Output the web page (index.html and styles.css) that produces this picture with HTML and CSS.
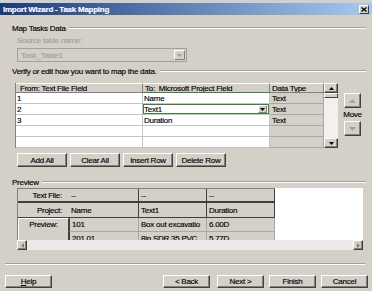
FILE: index.html
```html
<!DOCTYPE html>
<html>
<head>
  <title>Import Wizard - Task Mapping</title>
  <link rel="stylesheet" href="styles.css">
</head>
<body>
  <div class="window">

    <!-- Title bar -->
    <div class="titlebar">
      <span>Import Wizard - Task Mapping</span>
      <span class="close">
        <svg width="6" height="5" viewBox="0 0 6 5"><path d="M0.5 0.5 L5.5 4.5 M5.5 0.5 L0.5 4.5" stroke="#000" stroke-width="1.3"/></svg>
      </span>
    </div>

    <!-- Source table -->
    <div class="group-title">Map Tasks Data</div>
    <div class="field-label">Source table name:</div>
    <div class="combo">
      <span class="combo-text">Task_Table1</span>
      <span class="drop">
        <svg width="5" height="3" viewBox="0 0 5 3"><polygon points="0,0 5,0 2.5,3" fill="#a0a0a0"/></svg>
      </span>
    </div>

    <!-- Mapping grid -->
    <div class="group-title verify-title">Verify or edit how you want to map the data.</div>
    <div class="mapping">
      <div class="map-frame">
        <div class="map-table">
          <div class="cell head head-first">From: Text File Field</div>
          <div class="cell head head-focus">To:&nbsp; Microsoft Project Field</div>
          <div class="cell head">Data Type</div>

          <div class="cell">1</div>
          <div class="cell">Name</div>
          <div class="cell type">Text</div>

          <div class="cell">2</div>
          <div class="cell selected">
            <span>Text1</span>
            <span class="cell-drop">
              <svg width="5" height="3" viewBox="0 0 5 3"><polygon points="0,0 5,0 2.5,3" fill="#000"/></svg>
            </span>
          </div>
          <div class="cell type">Text</div>

          <div class="cell">3</div>
          <div class="cell">Duration</div>
          <div class="cell type">Text</div>

          <div class="cell"></div>
          <div class="cell"></div>
          <div class="cell type"></div>

          <div class="cell"></div>
          <div class="cell"></div>
          <div class="cell type"></div>
        </div>
        <div class="vscroll">
          <div class="sbtn">
            <svg width="5" height="3" viewBox="0 0 5 3"><polygon points="0,3 5,3 2.5,0" fill="#000"/></svg>
          </div>
          <div class="thumb"></div>
          <div class="track"></div>
          <div class="sbtn">
            <svg width="5" height="3" viewBox="0 0 5 3"><polygon points="0,0 5,0 2.5,3" fill="#000"/></svg>
          </div>
        </div>
      </div>
      <div class="move">
        <div class="move-btn">
          <svg width="7" height="4" viewBox="0 0 7 4"><polygon points="0,4 7,4 3.5,0" fill="#a0a0a0"/></svg>
        </div>
        <div class="move-label">Move</div>
        <div class="move-btn">
          <svg width="7" height="4" viewBox="0 0 7 4"><polygon points="0,0 7,0 3.5,4" fill="#a0a0a0"/></svg>
        </div>
      </div>
    </div>

    <div class="actions">
      <button class="btn">Add All</button>
      <button class="btn">Clear All</button>
      <button class="btn">Insert Row</button>
      <button class="btn">Delete Row</button>
    </div>

    <!-- Preview -->
    <div class="group-title">Preview</div>
    <div class="preview">
      <div class="preview-area">
        <div class="preview-grid">
          <div class="pv-label pv-first">Text File:</div>
          <div class="pv-cell pv-first">--</div>
          <div class="pv-cell pv-first">--</div>
          <div class="pv-cell pv-first">--</div>

          <div class="pv-label pv-second">Project:</div>
          <div class="pv-cell pv-second">Name</div>
          <div class="pv-cell pv-second">Text1</div>
          <div class="pv-cell pv-second">Duration</div>

          <div class="pv-label pv-rowhead">Preview:</div>
          <div class="pv-cell pv-data pv-lead">101</div>
          <div class="pv-cell pv-data">Box out excavatio</div>
          <div class="pv-cell pv-data">6.00D</div>

          <div class="pv-cell pv-data pv-lead">201.01</div>
          <div class="pv-cell pv-data">8in SDR 35 PVC</div>
          <div class="pv-cell pv-data">5.77D</div>
        </div>
        <div class="preview-blank"></div>
      </div>
      <div class="hscroll">
        <div class="sbtn">
          <svg width="3" height="5" viewBox="0 0 3 5"><polygon points="3,0 3,5 0,2.5" fill="#808080"/></svg>
        </div>
        <div class="track"></div>
        <div class="sbtn">
          <svg width="3" height="5" viewBox="0 0 3 5"><polygon points="0,0 0,5 3,2.5" fill="#808080"/></svg>
        </div>
      </div>
    </div>

    <div class="separator"></div>

    <!-- Wizard buttons -->
    <div class="footer">
      <button class="btn wide"><u>H</u>elp</button>
      <button class="btn wide back">&lt; Back</button>
      <button class="btn wide">Next &gt;</button>
      <button class="btn wide">Finish</button>
      <button class="btn wide">Cancel</button>
    </div>

  </div>
</body>
</html>
```

FILE: styles.css
```css
* {
  box-sizing: border-box;
}
body {
  margin: 0;
  font-family: "Liberation Sans", Arial, sans-serif;
  font-size: 8px;
  letter-spacing: -0.25px;
  color: #000;
  background: #d4d0c8;
  -webkit-text-stroke: 0.15px;
}
.window {
  width: 372px;
  height: 291px;
  overflow: hidden;
  padding-top: 3px;
  background: #d4d0c8;
}

/* Title bar */
.titlebar {
  display: flex;
  align-items: center;
  justify-content: space-between;
  height: 12px;
  padding: 0 3px 0 3px;
  background: linear-gradient(to right, #1c3a7a, #a6caf0);
  color: #fff;
  font-weight: bold;
}
.close {
  display: flex;
  align-items: center;
  justify-content: center;
  width: 10px;
  height: 9px;
  background: #d4d0c8;
  border: 1px solid;
  border-color: #fff #404040 #404040 #fff;
}

/* Group titles with etched line */
.group-title {
  display: flex;
  align-items: center;
  height: 10px;
  margin: 8px 6px 0 12px;
  white-space: nowrap;
}
.group-title::after {
  content: "";
  flex: 1;
  margin-left: 3px;
  border-top: 1px solid #a0a0a0;
  border-bottom: 1px solid #fff;
}
.verify-title {
  margin-top: 4px;
}

/* Source table */
.field-label {
  margin: 3px 0 0 17px;
  height: 10px;
  line-height: 10px;
  color: #a4a19b;
}
.combo {
  display: flex;
  align-items: center;
  justify-content: space-between;
  width: 170px;
  height: 14px;
  margin: 2px 0 0 17px;
  padding: 0 1px 0 3px;
  border: 1px solid #a0a0a0;
  color: #a4a19b;
}
.drop {
  display: flex;
  align-items: center;
  justify-content: center;
  width: 11px;
  height: 10px;
  border: 1px solid;
  border-color: #fff #808080 #808080 #fff;
}

/* Mapping grid */
.mapping {
  display: flex;
  margin: 7px 0 0 15px;
}
.map-frame {
  display: flex;
  border-left: 1px solid #808080;
}
.map-table {
  display: grid;
  grid-template-columns: 127px 127px 54px;
  grid-template-rows: 10px repeat(5, 11px);
}
.cell {
  display: flex;
  align-items: center;
  justify-content: space-between;
  padding-left: 1px;
  background: #fff;
  border-right: 1px solid #c4c4c4;
  border-bottom: 1px solid #c4c4c4;
  white-space: nowrap;
  overflow: hidden;
}
.head {
  padding-left: 2px;
  background: #d4d0c8;
  border-top: 1px solid #fff;
  border-right-color: #808080;
  border-bottom-color: #808080;
}
.head-first {
  padding-left: 4px;
}
.head-focus {
  border-bottom-color: #3f7f3f;
}
.type {
  padding-left: 2px;
  background: #d4d0c8;
  border-right-color: #a8a8a8;
  border-bottom-color: #a8a8a8;
}
.selected {
  box-shadow: inset 0 0 0 1px #3f7f3f;
  padding-right: 2px;
}
.cell-drop {
  display: flex;
  align-items: center;
  justify-content: center;
  width: 9px;
  height: 8px;
  background: #d4d0c8;
  border: 1px solid;
  border-color: #fff #808080 #808080 #fff;
}
.vscroll {
  display: flex;
  flex-direction: column;
  width: 14px;
  background: #f2f1ef;
}
.sbtn {
  display: flex;
  align-items: center;
  justify-content: center;
  width: 10px;
  height: 10px;
  flex: none;
  background: #d4d0c8;
  border: 1px solid;
  border-color: #fff #404040 #404040 #fff;
  box-shadow: inset -1px -1px #808080;
}
.vscroll .sbtn {
  width: 100%;
}
.thumb {
  height: 5px;
  background: #d4d0c8;
  border: 1px solid;
  border-color: #fff #404040 #404040 #fff;
}
.track {
  flex: 1;
}
.move {
  display: flex;
  flex-direction: column;
  align-items: center;
  width: 17px;
  margin: 10px 0 0 6px;
}
.move-btn {
  display: flex;
  align-items: center;
  justify-content: center;
  width: 17px;
  height: 15px;
  border: 1px solid;
  border-color: #fff #404040 #404040 #fff;
  box-shadow: inset -1px -1px #808080;
}
.move-label {
  height: 13px;
  line-height: 13px;
}

/* Buttons */
.btn {
  display: flex;
  align-items: center;
  justify-content: center;
  height: 14px;
  width: 50px;
  padding: 0;
  font: inherit;
  letter-spacing: inherit;
  color: #000;
  background: #d4d0c8;
  border: 1px solid;
  border-color: #fff #404040 #404040 #fff;
  box-shadow: inset -1px -1px #808080;
}
.actions {
  display: flex;
  gap: 3px;
  margin: 5px 0 0 17px;
}
.actions + .group-title {
  margin-top: 10px;
}

/* Preview */
.preview {
  width: 346px;
  margin: 1px 0 0 17px;
}
.preview-area {
  display: flex;
  height: 52px;
  overflow: hidden;
}
.preview-grid {
  display: grid;
  grid-template-columns: 51px 70px 68px 68px;
  grid-template-rows: 14px 15px 14px 14px;
  border-left: 1px solid #808080;
  border-top: 1px solid #808080;
}
.preview-blank {
  flex: 1;
  background: #fff;
}
.pv-label {
  display: flex;
  align-items: center;
  justify-content: center;
  white-space: nowrap;
}
.pv-cell {
  display: flex;
  align-items: center;
  padding-left: 2px;
  white-space: nowrap;
  overflow: hidden;
  border-right: 1px solid #404040;
}
.pv-first {
  border-bottom: 2px solid #404040;
}
.pv-second {
  border-bottom: 1px solid #404040;
}
.pv-label.pv-first,
.pv-label.pv-second {
  justify-content: flex-end;
  padding-right: 7px;
}
.pv-rowhead {
  grid-row: span 2;
  align-items: flex-start;
  padding-top: 1px;
  border: 1px solid;
  border-color: #fff #404040 #404040 #fff;
}
.pv-data {
  border-right-color: #a8a8a8;
  border-bottom: 1px solid #a8a8a8;
}
.pv-lead {
  border-left: 1px solid #404040;
}
.hscroll {
  display: flex;
  height: 10px;
  background: #eceae6;
}

/* Footer */
.separator {
  margin: 13px 7px 0 5px;
  border-top: 1px solid #a0a0a0;
  border-bottom: 1px solid #fff;
}
.footer {
  display: flex;
  gap: 5px;
  margin-top: 10px;
  padding: 0 4px 0 5px;
}
.wide {
  width: 47px;
  height: 13px;
}
.back {
  margin-left: auto;
  margin-right: 2px;
}
```
